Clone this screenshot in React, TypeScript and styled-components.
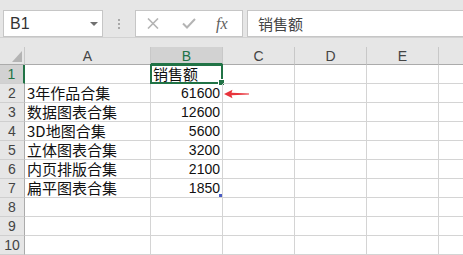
import styled, { createGlobalStyle } from "styled-components";

const GlobalStyle = createGlobalStyle`
  body {
    margin: 0;
    background: #ffffff;
    font-family: "Liberation Sans", "Noto Sans CJK SC", sans-serif;
    overflow: hidden;
  }
`;

const GREEN = "#217346";
const GRID = "#d4d4d4";

const Page = styled.div`
  width: 463px;
  height: 255px;
  overflow: hidden;
  background: #fff;
`;

const Toolbar = styled.div`
  height: 38px;
  box-sizing: border-box;
  background: #e6e6e6;
  border-bottom: 1px solid #d2d2d2;
  display: flex;
  align-items: flex-start;
  padding: 10px 0 0 3px;
`;

const NameBox = styled.div`
  width: 100px;
  height: 27px;
  box-sizing: border-box;
  background: #fff;
  border: 1px solid #c6c6c6;
  display: flex;
  align-items: center;
  justify-content: space-between;
  padding: 0 4px 0 6px;
  font-size: 16px;
  color: #333;
`;

const Caret = styled.span`
  width: 0;
  height: 0;
  border-left: 4px solid transparent;
  border-right: 4px solid transparent;
  border-top: 4px solid #707070;
`;

const Grip = styled.div`
  width: 32px;
  height: 27px;
  display: flex;
  flex-direction: column;
  align-items: center;
  justify-content: center;
  gap: 2px;
  span {
    width: 2px;
    height: 2px;
    background: #a8a8a8;
  }
`;

const FuncBox = styled.div`
  width: 108px;
  height: 27px;
  box-sizing: border-box;
  background: #fff;
  border: 1px solid #c6c6c6;
  display: flex;
  align-items: center;
  padding-left: 11px;
  gap: 23px;
`;

const Fx = styled.span`
  font-family: "Liberation Serif", serif;
  font-style: italic;
  font-size: 16px;
  color: #5e5e5e;
  margin-left: -3px;
`;

const FormulaInput = styled.div`
  flex: 1;
  height: 27px;
  margin-left: 4px;
  margin-right: -4px;
  box-sizing: border-box;
  background: #fff;
  border: 1px solid #c6c6c6;
  display: flex;
  align-items: center;
  padding-left: 10px;
  font-family: "Noto Sans CJK SC", sans-serif;
  font-size: 15px;
  color: #444;
`;

const HeaderGap = styled.div`
  height: 9px;
  background: #e6e6e6;
`;

const Grid = styled.div`
  display: grid;
  grid-template-columns: 25px 126px 72px 72px 72px 72px 72px;
  grid-template-rows: 18px repeat(10, 19px);
  width: 511px;
`;

const Corner = styled.div`
  background: #e6e6e6;
  border-right: 1px solid #c8c8c8;
  border-bottom: 1px solid #ababab;
  box-sizing: border-box;
  position: relative;
  svg {
    position: absolute;
    left: 0;
    top: 0;
  }
`;

const ColHead = styled.div<{ $active?: boolean }>`
  box-sizing: border-box;
  background: ${(p) => (p.$active ? "#d2d2d2" : "#e6e6e6")};
  border-right: 1px solid #c8c8c8;
  border-bottom: ${(p) => (p.$active ? `2px solid ${GREEN}` : "1px solid #ababab")};
  color: ${(p) => (p.$active ? GREEN : "#444")};
  font-size: 14px;
  display: flex;
  align-items: center;
  justify-content: center;
  padding-top: 1px;
`;

const RowHead = styled.div<{ $active?: boolean }>`
  box-sizing: border-box;
  background: ${(p) => (p.$active ? "#d2d2d2" : "#e6e6e6")};
  border-right: ${(p) => (p.$active ? `2px solid ${GREEN}` : "1px solid #ababab")};
  border-bottom: 1px solid #cfcfcf;
  color: ${(p) => (p.$active ? GREEN : "#444")};
  font-size: 14px;
  display: flex;
  align-items: flex-end;
  justify-content: center;
  padding-bottom: 1px;
  line-height: 16px;
`;

const Cell = styled.div<{ $align?: "left" | "right" }>`
  box-sizing: border-box;
  position: relative;
  border-right: 1px solid ${GRID};
  border-bottom: 1px solid ${GRID};
  display: flex;
  align-items: flex-end;
  justify-content: ${(p) => (p.$align === "right" ? "flex-end" : "flex-start")};
  padding: 0 2px 1px 2px;
  white-space: nowrap;
  color: #111;
`;

const TextVal = styled.span`
  font-family: "Noto Sans CJK SC", sans-serif;
  font-size: 15px;
  line-height: 17px;
`;

const NumVal = styled.span`
  font-family: "Liberation Sans", sans-serif;
  font-size: 14px;
  line-height: 16px;
`;

const Selection = styled.div`
  position: absolute;
  left: -1px;
  top: -1px;
  right: -1px;
  bottom: -1px;
  border: 2px solid ${GREEN};
  pointer-events: none;
`;

const FillHandle = styled.div`
  position: absolute;
  right: -4px;
  bottom: -4px;
  width: 5px;
  height: 5px;
  background: ${GREEN};
  border: 1px solid #fff;
`;

const FillMark = styled.div`
  position: absolute;
  right: 0px;
  bottom: 0px;
  width: 3px;
  height: 3px;
  background: #4a5cc4;
`;

const Arrow = styled.svg`
  position: absolute;
  left: 1px;
  top: 5px;
`;

// F is off-screen to the right, so its header stays blank
const columns = ["A", "B", "C", "D", "E", ""];

const rows: Array<[string, string]> = [
  ["", "销售额"],
  ["3年作品合集", "61600"],
  ["数据图表合集", "12600"],
  ["3D地图合集", "5600"],
  ["立体图表合集", "3200"],
  ["内页排版合集", "2100"],
  ["扁平图表合集", "1850"],
  ["", ""],
  ["", ""],
  ["", ""],
];

const XIcon = () => (
  <svg width="12" height="11" viewBox="0 0 12 11">
    <path d="M1 0.5 L11 10.5 M11 0.5 L1 10.5" stroke="#b4b4b4" strokeWidth="1.6" fill="none" />
  </svg>
);

const CheckIcon = () => (
  <svg width="14" height="11" viewBox="0 0 14 11">
    <path d="M1 5.5 L5 9.5 L13 1" stroke="#b4b4b4" strokeWidth="2" fill="none" />
  </svg>
);

export default function App() {
  return (
    <Page>
      <GlobalStyle />
      <Toolbar>
        <NameBox>
          B1
          <Caret />
        </NameBox>
        <Grip>
          <span />
          <span />
          <span />
        </Grip>
        <FuncBox>
          <XIcon />
          <CheckIcon />
          <Fx>fx</Fx>
        </FuncBox>
        <FormulaInput>销售额</FormulaInput>
      </Toolbar>
      <HeaderGap />
      <Grid>
        <Corner>
          <svg width="25" height="18" viewBox="0 0 25 18">
            <polygon points="22,4 22,15 12,15" fill="#b4b4b4" />
          </svg>
        </Corner>
        {columns.map((c, i) => (
          <ColHead key={i} $active={c === "B"}>
            {c}
          </ColHead>
        ))}
        {rows.map(([a, b], i) => {
          const n = i + 1;
          const isNum = n > 1 && b !== "";
          return [
            <RowHead key={`h${n}`} $active={n === 1}>
              {n}
            </RowHead>,
            <Cell key={`a${n}`}>{a && <TextVal>{a}</TextVal>}</Cell>,
            <Cell key={`b${n}`} $align={isNum ? "right" : "left"}>
              {isNum ? <NumVal>{b}</NumVal> : b && <TextVal>{b}</TextVal>}
              {n === 1 && (
                <Selection>
                  <FillHandle />
                </Selection>
              )}
              {n === 7 && <FillMark />}
            </Cell>,
            <Cell key={`c${n}`}>
              {n === 2 && (
                <Arrow width="25" height="10" viewBox="0 0 25 10">
                  <path d="M0 5 L8.5 0.8 L7.5 3.8 L25 4.5 L25 5.5 L7.5 6.2 L8.5 9.2 Z" fill="#e8343c" />
                </Arrow>
              )}
            </Cell>,
            <Cell key={`d${n}`} />,
            <Cell key={`e${n}`} />,
            <Cell key={`f${n}`} />,
          ];
        })}
      </Grid>
    </Page>
  );
}
